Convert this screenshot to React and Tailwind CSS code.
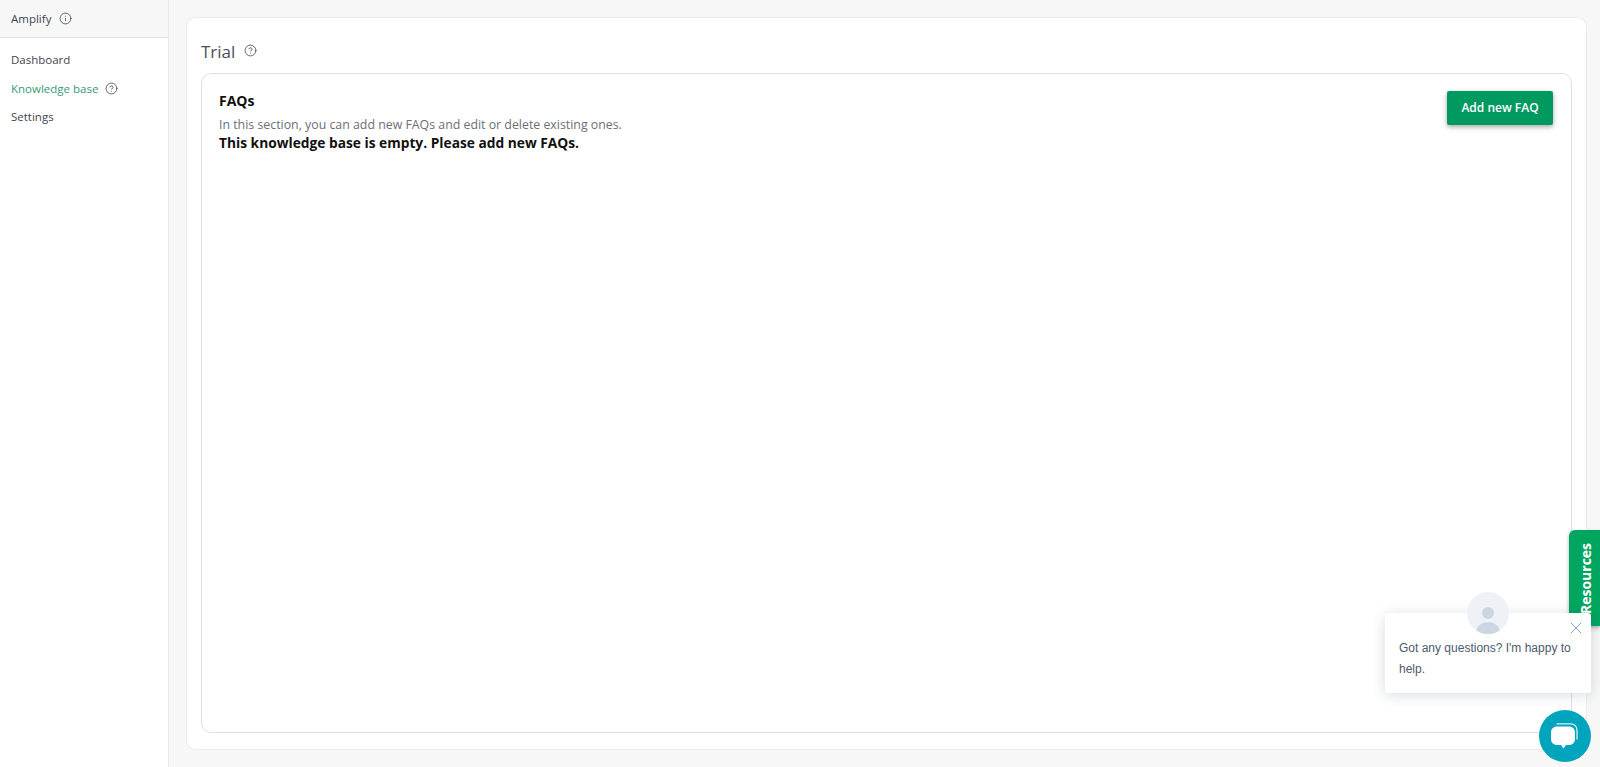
import { Info, CircleHelp, X } from "lucide-react";

export default function App() {
  return (
    <div className="relative flex h-[767px] overflow-hidden bg-[#f7f7f7] font-['Open_Sans',sans-serif]">
      <aside className="h-full w-[169px] shrink-0 border-r border-[#e4e6eb] bg-white">
        <div className="flex h-[38px] items-center gap-[8px] border-b border-[#e2e4ea] bg-[#f7f7f7] pl-[11px] text-[11.5px] text-[#3f4652]">
          Amplify
          <Info size={13} strokeWidth={1.5} />
        </div>
        <nav className="flex flex-col gap-[10.5px] pl-[11px] pt-[13px] text-[11.5px] leading-[18px] text-[#3f4652]">
          <span>Dashboard</span>
          <span className="flex items-center gap-[7px] text-[#3a9a78]">
            Knowledge base
            <CircleHelp size={13} strokeWidth={1.5} className="text-[#3f4652]" />
          </span>
          <span>Settings</span>
        </nav>
      </aside>

      <main className="flex-1 pb-[17px] pl-[17px] pr-[13px] pt-[17px]">
        <div className="flex h-full flex-col rounded-[10px] border border-[#ececec] bg-white px-[14px] pb-[16px] pt-[22px]">
          <div className="flex h-[33px] items-start gap-[9px] text-[17px] leading-[24px] text-[#46505c]">
            Trial
            <CircleHelp size={13} strokeWidth={1.5} className="mt-[4px] text-[#3f4652]" />
          </div>
          <section className="flex flex-1 items-start justify-between rounded-[10px] border border-[#dfdfdf] pl-[17px] pr-[18px] pt-[17px]">
            <div>
              <h2 className="text-[14px] font-bold leading-[20px] text-[#111]">FAQs</h2>
              <p className="mt-[5px] text-[12.35px] leading-[18px] text-[#6b6f76]">
                In this section, you can add new FAQs and edit or delete existing ones.
              </p>
              <p className="-mt-[1px] text-[13.75px] font-bold leading-[20px] text-[#111]">
                This knowledge base is empty. Please add new FAQs.
              </p>
            </div>
            <button className="h-[34px] w-[106px] rounded-[2px] bg-[#009a61] text-[12px] font-semibold text-white shadow-[0_2px_5px_rgba(0,0,0,0.35)]">
              Add new FAQ
            </button>
          </section>
        </div>
      </main>

      <div className="absolute right-0 top-[530px] flex h-[96px] w-[31px] items-center justify-center rounded-tl-[6px] bg-[#00a560] pl-[3px] shadow-[0_2px_4px_rgba(0,0,0,0.3)]">
        <span className="rotate-[-90deg] whitespace-nowrap text-[14px] font-bold text-white">Resources</span>
      </div>

      <div className="absolute left-[1385px] top-[613px] h-[80px] w-[206px] rounded-[3px] bg-white px-[14px] pt-[25px] font-['Liberation_Sans',sans-serif] text-[12px] leading-[21px] text-[#4a5a6e] shadow-[0_2px_14px_rgba(45,62,80,0.18)]">
        Got any questions? I'm happy to help.
        <X size={20} strokeWidth={1.1} className="absolute right-[5px] top-[5px] text-[#7c98b6]" />
      </div>

      <div className="absolute left-[1467px] top-[592px] flex h-[42px] w-[42px] items-end justify-center overflow-hidden rounded-full bg-[#eef2f7]">
        <svg width="26" height="30" viewBox="0 0 26 30">
          <circle cx="13" cy="9" r="6" fill="#cbd6e2" />
          <path d="M0.5 30 C1 22 7 18 13 18 C19 18 25 22 25.5 30 Z" fill="#cbd6e2" />
        </svg>
      </div>

      <div className="absolute left-[1539px] top-[710px] flex h-[52px] w-[52px] items-center justify-center rounded-full bg-[#00a4bd]">
        <svg width="28" height="28" viewBox="0 0 28 28" fill="none">
          <path d="M6 1.8 H20 C23.5 1.8 26 4.5 26 8 V17" stroke="#fff" strokeWidth="1.3" strokeLinecap="round" opacity="0.85" />
          <path d="M6 4.5 H18 C21.5 4.5 24 7 24 10.5 V17 C24 20.5 21.5 23 18 23 H15 L12.5 26.5 L10 23 H6 C2.5 23 0 20.5 0 17 V10.5 C0 7 2.5 4.5 6 4.5 Z" fill="#fff" />
        </svg>
      </div>
    </div>
  );
}
